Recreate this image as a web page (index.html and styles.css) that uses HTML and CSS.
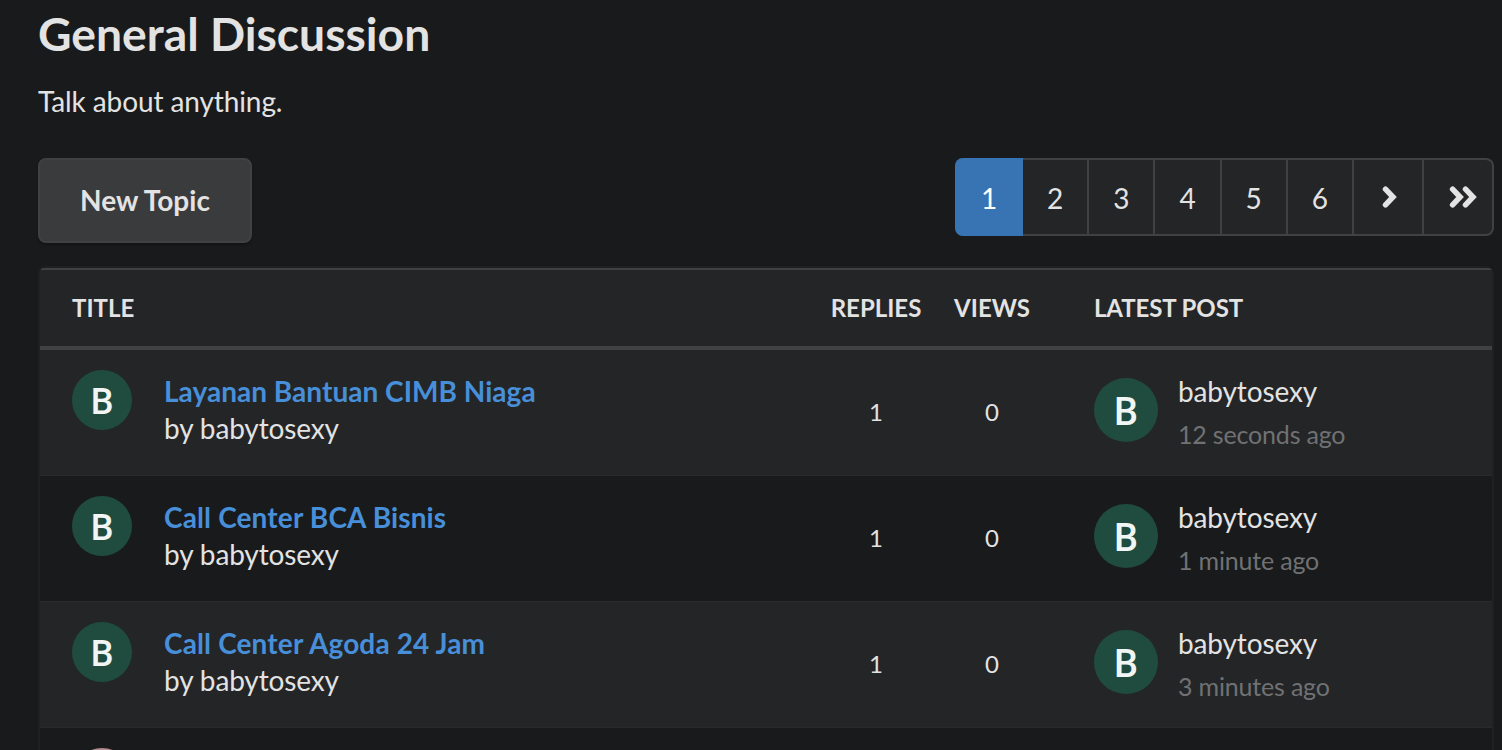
FILE: index.html
```html
<!DOCTYPE html>
<html lang="en">
<head>
<meta charset="utf-8">
<title>General Discussion</title>
<link rel="stylesheet" href="styles.css">
</head>
<body>
<main class="forum">
  <h1 class="forum-title">General Discussion</h1>
  <p class="forum-desc">Talk about anything.</p>
  <div class="toolbar">
    <button class="new-topic" type="button">New Topic</button>
    <nav class="pages">
      <a class="page active">1</a>
      <a class="page">2</a>
      <a class="page">3</a>
      <a class="page">4</a>
      <a class="page">5</a>
      <a class="page">6</a>
      <a class="page next"><svg width="16" height="24" viewBox="0 0 16 24"><path d="M3.500 4.200L11 12 3.500 19.800"/></svg></a>
      <a class="page last"><svg width="30" height="24" viewBox="0 0 30 24"><path d="M3.600 4.200L11.100 12 3.600 19.800M16.500 4.200L24 12 16.500 19.800"/></svg></a>
    </nav>
  </div>
  <section class="topics">
    <div class="topics-inner">
    <div class="row head">
      <div>TITLE</div><div class="num">REPLIES</div><div class="num">VIEWS</div><div class="latest-head">LATEST POST</div>
    </div>
    <div class="row topic">
      <div class="subject"><span class="avatar">B</span><div class="lines"><a class="link">Layanan Bantuan CIMB Niaga</a><span>by babytosexy</span></div></div>
      <div class="num">1</div><div class="num">0</div>
      <div class="latest"><span class="avatar large">B</span><div class="lines"><span>babytosexy</span><time>12 seconds ago</time></div></div>
    </div>
    <div class="row topic dark">
      <div class="subject"><span class="avatar">B</span><div class="lines"><a class="link spaced">Call Center BCA Bisnis</a><span>by babytosexy</span></div></div>
      <div class="num">1</div><div class="num">0</div>
      <div class="latest"><span class="avatar large">B</span><div class="lines"><span>babytosexy</span><time>1 minute ago</time></div></div>
    </div>
    <div class="row topic">
      <div class="subject"><span class="avatar">B</span><div class="lines"><a class="link spaced">Call Center Agoda 24 Jam</a><span>by babytosexy</span></div></div>
      <div class="num">1</div><div class="num">0</div>
      <div class="latest"><span class="avatar large">B</span><div class="lines"><span>babytosexy</span><time>3 minutes ago</time></div></div>
    </div>
    <div class="row topic dark cut">
      <div class="subject"><span class="avatar photo"></span></div>
    </div>
    </div>
  </section>
</main>
</body>
</html>
```
FILE: styles.css
```css
* { box-sizing: border-box; }
body {
  margin: 0;
  height: 750px;
  overflow: hidden;
  background: #191a1b;
  color: #e3e3e3;
  font-family: Lato, sans-serif;
  font-size: 28px;
  line-height: 36px;
}
.forum { padding: 3px 8px 0 38px; }
.forum-title { margin: 0; font-size: 46.250px; line-height: 60px; font-weight: 700; }
.forum-desc { margin: 20px 0 0; letter-spacing: -0.100px; }
.toolbar {
  display: flex;
  justify-content: space-between;
  align-items: flex-start;
  height: 108px;
  margin-top: 39px;
}
.new-topic {
  width: 214px;
  height: 85px;
  padding: 0 0 1px;
  border: 2px solid #404142;
  border-radius: 8px;
  background: #3a3b3c;
  box-shadow: 0 2px 2px #141516;
  color: #e3e3e3;
  font: 700 28px/36px Lato, sans-serif;
}
.pages {
  display: flex;
  height: 78px;
  border: 2px solid #404142;
  border-left: 0;
  border-radius: 8px;
  background: #242527;
}
.page {
  display: flex;
  justify-content: center;
  align-items: center;
  width: 66.200px;
  padding-top: 1px;
  border-right: 2px solid #404142;
}
.page.active {
  width: 68px;
  margin: -2px 0;
  border: 0;
  border-radius: 8px 0 0 8px;
  background: #3873b3;
  color: #fff;
}
.page.next { width: 70px; padding: 0 0 0 4px; }
.page.last { width: 68px; border: 0; padding: 0 0 0 11px; }
.page svg { fill: none; stroke: #e3e3e3; stroke-width: 5.500; stroke-linecap: round; }
.topics {
  height: 484px;
  overflow: hidden;
  padding: 1px 1px 0;
  border: 1px solid #1f2022;
  border-bottom: 0;
  border-radius: 8px 8px 0 0;
  background: #1f2022;
}
.topics-inner { border-top: 2px solid #404142; }
.row {
  display: grid;
  grid-template-columns: 742px 124px 108px 1fr;
  height: 126px;
  padding-left: 32px;
  background: #242527;
}
.head {
  height: 80px;
  border-bottom: 4px solid #404142;
  align-items: center;
  font-size: 24px;
  font-weight: 700;
}
.latest-head { padding-left: 48px; letter-spacing: -0.100px; }
.topic { border-bottom: 1px solid #292a2b; }
.dark { background: #191a1b; }
.cut { height: 23px; border: 0; overflow: hidden; }
.num { align-self: center; text-align: center; font-size: 24px; }
.topic .num { padding-bottom: 2px; }
.subject { display: flex; gap: 32px; padding-top: 20px; }
.lines { display: flex; flex-direction: column; letter-spacing: -0.130px; }
.subject .lines { padding-top: 3px; line-height: 37px; }
.link { color: #488fd9; font-weight: 700; letter-spacing: 0.030px; }
.link.spaced { letter-spacing: 0.140px; }
.avatar {
  width: 60px;
  height: 60px;
  border-radius: 50%;
  background: #204c40;
  color: #f1f6f4;
  font: 500 36px/64px Roboto, sans-serif;
  text-align: center;
}
.avatar.large { width: 64px; height: 64px; font-size: 38px; line-height: 69px; }
.avatar.photo { background: #b38b91; }
.latest { display: flex; gap: 20px; padding: 28px 0 0 48px; }
.latest .lines { margin-top: -5px; line-height: 37px; }
time { margin-top: 6px; color: #707173; font-size: 25px; letter-spacing: -0.180px; }
```
